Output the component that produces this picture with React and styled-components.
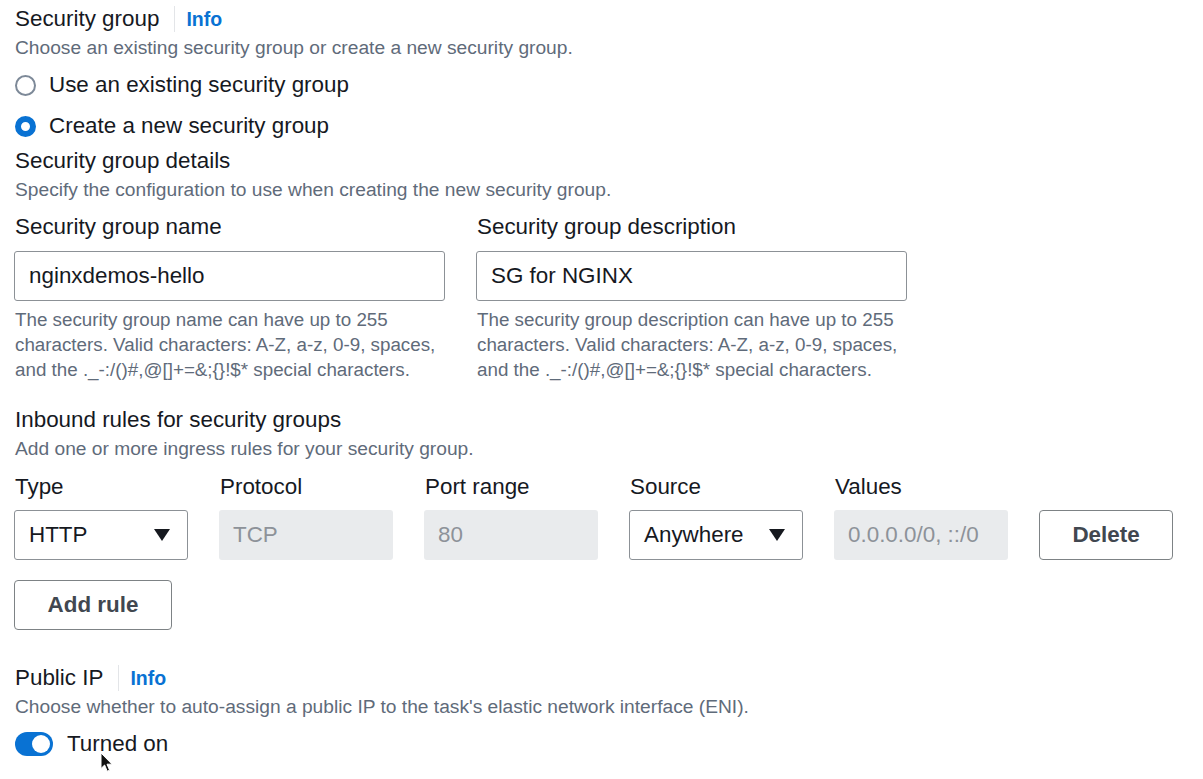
import React, { useState } from 'react';
import styled, { createGlobalStyle } from 'styled-components';

const GlobalStyle = createGlobalStyle`
  body {
    margin: 0;
    background: #ffffff;
    font-family: "Liberation Sans", Arial, sans-serif;
    color: #16191f;
  }
`;

const BLUE = '#0972d3';

const App = () => {
  const [mode, setMode] = useState('new');
  const [publicIp, setPublicIp] = useState(true);

  return (
    <Page>
      <GlobalStyle />
      <Heading>
        Security group
        <Separator />
        <InfoLink>Info</InfoLink>
      </Heading>
      <Description>Choose an existing security group or create a new security group.</Description>

      <RadioGroup>
        <RadioRow onClick={() => setMode('existing')}>
          <RadioDot $checked={mode === 'existing'} />
          Use an existing security group
        </RadioRow>
        <RadioRow onClick={() => setMode('new')}>
          <RadioDot $checked={mode === 'new'} />
          Create a new security group
        </RadioRow>
      </RadioGroup>

      <Heading>Security group details</Heading>
      <Description>Specify the configuration to use when creating the new security group.</Description>

      <FieldGrid>
        <Field>
          <Label>Security group name</Label>
          <TextInput defaultValue="nginxdemos-hello" />
          <Help>
            The security group name can have up to 255<br />
            characters. Valid characters: A-Z, a-z, 0-9, spaces,<br />
            and the ._-:/()#,@[]+=&amp;;{'{}'}!$* special characters.
          </Help>
        </Field>
        <Field>
          <Label>Security group description</Label>
          <TextInput defaultValue="SG for NGINX" />
          <Help>
            The security group description can have up to 255<br />
            characters. Valid characters: A-Z, a-z, 0-9, spaces,<br />
            and the ._-:/()#,@[]+=&amp;;{'{}'}!$* special characters.
          </Help>
        </Field>
      </FieldGrid>

      <Heading $top={24}>Inbound rules for security groups</Heading>
      <Description>Add one or more ingress rules for your security group.</Description>

      <RulesGrid>
        <ColLabel>Type</ColLabel>
        <ColLabel>Protocol</ColLabel>
        <ColLabel>Port range</ColLabel>
        <ColLabel>Source</ColLabel>
        <ColLabel>Values</ColLabel>
        <span />
        <Select>
          HTTP
          <Caret />
        </Select>
        <Disabled>TCP</Disabled>
        <Disabled>80</Disabled>
        <Select>
          Anywhere
          <Caret />
        </Select>
        <Disabled>0.0.0.0/0, ::/0</Disabled>
        <Button $wide>Delete</Button>
      </RulesGrid>

      <AddRow>
        <Button>Add rule</Button>
      </AddRow>

      <Heading $top={34}>
        Public IP
        <Separator />
        <InfoLink>Info</InfoLink>
      </Heading>
      <Description>Choose whether to auto-assign a public IP to the task's elastic network interface (ENI).</Description>

      <ToggleRow onClick={() => setPublicIp(!publicIp)}>
        <Toggle $on={publicIp}>
          <Knob />
        </Toggle>
        {publicIp ? 'Turned on' : 'Turned off'}
        <Cursor>
          <svg width="13" height="21" viewBox="0 0 13 21" aria-hidden="true">
            <path d="M1 1 L1 16.5 L4.6 13 L7.2 19.2 L9.6 18.2 L7 12.2 L12 12.2 Z" fill="#111" stroke="#fff" strokeWidth="1" />
          </svg>
        </Cursor>
      </ToggleRow>
    </Page>
  );
};

export default App;

const Page = styled.div`
  padding: 5px 0 22px 15px;
  width: 1180px;
`;

const Heading = styled.div`
  display: flex;
  align-items: center;
  font-size: 22.4px;
  line-height: 28px;
  margin-top: ${props => props.$top || 0}px;
`;

const Separator = styled.span`
  display: inline-block;
  width: 1px;
  height: 26px;
  background: #e3e5e8;
  margin: 0 11px 0 15px;
`;

const InfoLink = styled.a`
  color: ${BLUE};
  font-weight: bold;
  font-size: 19.5px;
  cursor: pointer;
`;

const Description = styled.div`
  margin-top: 2px;
  font-size: 19.2px;
  line-height: 26px;
  color: #5f6b7a;
`;

const RadioGroup = styled.div`
  margin-top: 3.5px;
`;

const RadioRow = styled.label`
  display: flex;
  align-items: center;
  height: 41px;
  gap: 13px;
  font-size: 22.4px;
  cursor: pointer;
`;

const RadioDot = styled.span`
  box-sizing: border-box;
  width: 21px;
  height: 21px;
  border-radius: 50%;
  border: ${props => (props.$checked ? `6px solid ${BLUE}` : '2px solid #7d8998')};
  background: #fff;
`;

const FieldGrid = styled.div`
  display: grid;
  grid-template-columns: 431px 431px;
  column-gap: 31px;
  margin-top: 10px;
  margin-left: -1px;
`;

const Field = styled.div`
  display: flex;
  flex-direction: column;
`;

const Label = styled.div`
  font-size: 22.4px;
  line-height: 28px;
  margin-left: 1px;
`;

const TextInput = styled.input`
  box-sizing: border-box;
  margin-top: 10px;
  height: 50px;
  width: 100%;
  border: 1px solid #8c9196;
  border-radius: 3px;
  padding: 0 14px;
  font-family: inherit;
  font-size: 22.4px;
  color: #16191f;
  outline: none;
`;

const Help = styled.div`
  margin-top: 6.5px;
  margin-left: 1px;
  white-space: nowrap;
  font-size: 18.8px;
  line-height: 25px;
  color: #5f6b7a;
`;

const RulesGrid = styled.div`
  display: grid;
  grid-template-columns: repeat(5, 174px) 134px;
  column-gap: 31px;
  row-gap: 9px;
  margin-top: 11px;
  margin-left: -1px;
`;

const ColLabel = styled.div`
  font-size: 22.4px;
  line-height: 28px;
  margin-left: 1px;
`;

const Select = styled.div`
  box-sizing: border-box;
  height: 50px;
  display: flex;
  align-items: center;
  justify-content: space-between;
  padding: 0 17px 0 14px;
  border: 1px solid #8c9196;
  border-radius: 3px;
  font-size: 22.4px;
  cursor: pointer;
`;

const Caret = styled.span`
  width: 0;
  height: 0;
  border-left: 8px solid transparent;
  border-right: 8px solid transparent;
  border-top: 12px solid #16191f;
`;

const Disabled = styled.div`
  box-sizing: border-box;
  height: 50px;
  display: flex;
  align-items: center;
  padding: 0 14px;
  background: #e9ebed;
  border-radius: 3px;
  font-size: 22.4px;
  color: #8d9299;
`;

const Button = styled.button`
  box-sizing: border-box;
  height: 50px;
  width: ${props => (props.$wide ? '134px' : '158px')};
  background: #fff;
  border: 1px solid #7d8285;
  border-radius: 4px;
  font-family: inherit;
  font-size: 22.4px;
  font-weight: bold;
  color: #414750;
  cursor: pointer;
`;

const AddRow = styled.div`
  margin-top: 20px;
  margin-left: -1px;
`;

const ToggleRow = styled.div`
  position: relative;
  display: flex;
  align-items: center;
  gap: 14px;
  height: 28px;
  margin-top: 10px;
  font-size: 22.4px;
  cursor: pointer;
`;

const Toggle = styled.span`
  box-sizing: border-box;
  width: 38px;
  height: 24px;
  border-radius: 12px;
  background: ${props => (props.$on ? BLUE : '#7d8998')};
  display: flex;
  align-items: center;
  justify-content: ${props => (props.$on ? 'flex-end' : 'flex-start')};
  padding: 0 3px;
`;

const Knob = styled.span`
  width: 18px;
  height: 18px;
  border-radius: 50%;
  background: #fff;
`;

const Cursor = styled.span`
  position: absolute;
  left: 85px;
  top: 22px;
  width: 13px;
  height: 21px;
  line-height: 0;
  pointer-events: none;
`;
